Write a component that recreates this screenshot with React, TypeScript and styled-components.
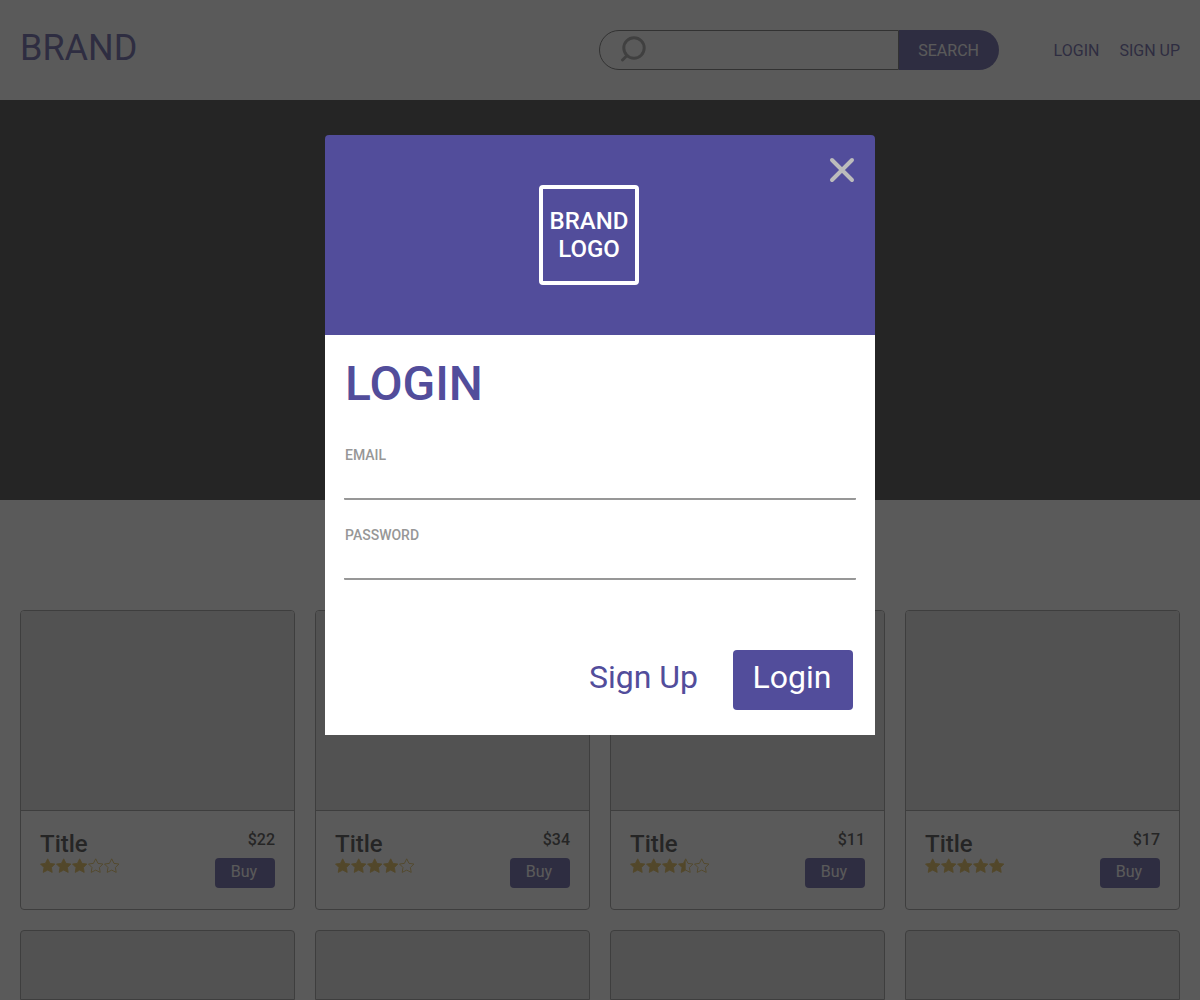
import React from 'react';
import styled, { createGlobalStyle, ThemeProvider } from 'styled-components';

const theme = {
  primary: '#524d9b',
  ink: '#2f2f2f',
  muted: '#979797',
  line: '#909090',
  media: '#e0e0e0',
  star: '#e0b440',
  radius: '4px',
};

const GlobalStyle = createGlobalStyle`
  *, *::before, *::after { box-sizing: border-box; }
  body {
    margin: 0;
    background: #fff;
    font-family: Roboto, "Liberation Sans", sans-serif;
    font-size: 16px;
  }
  button, input { font: inherit; }
  button { cursor: pointer; }
`;

const Header = styled.header`
  display: flex;
  align-items: center;
  min-height: 100px;
  padding: 0 20px;
`;

const Brand = styled.a`
  margin-right: auto;
  padding-bottom: 4px;
  color: ${({ theme }) => theme.primary};
  font-size: 36px;
  line-height: 40px;
  text-decoration: none;
`;

const SearchForm = styled.form`
  display: flex;
  width: 400px;
  height: 40px;
`;

const SearchField = styled.div`
  display: flex;
  flex: 1;
  align-items: center;
  min-width: 0;
  padding-left: 20px;
  border: 1px solid #606060;
  border-radius: 20px 0 0 20px;
  svg { flex: none; margin-bottom: 2px; }
`;

const SearchInput = styled.input`
  flex: 1;
  min-width: 0;
  height: 100%;
  padding: 0 12px;
  border: 0;
  outline: 0;
  background: transparent;
`;

const SearchButton = styled.button`
  width: 100px;
  padding: 0;
  border: 0;
  border-radius: 0 20px 20px 0;
  background: ${({ theme }) => theme.primary};
  color: #fff;
`;

const Nav = styled.nav`
  display: flex;
  gap: 20px;
  margin-left: 55px;
`;

const NavLink = styled.a`
  color: ${({ theme }) => theme.primary};
  text-decoration: none;
`;

const Hero = styled.section`
  height: 400px;
  background: ${({ theme }) => theme.ink};
`;

const ProductGrid = styled.section`
  display: grid;
  grid-template-columns: repeat(4, minmax(0, 1fr));
  gap: 20px;
  padding: 110px 20px 0;
`;

const Card = styled.article`
  border: 1px solid ${({ theme }) => theme.line};
  border-radius: ${({ theme }) => theme.radius};
  overflow: hidden;
`;

const CardMedia = styled.div`
  height: 200px;
  border-bottom: 1px solid ${({ theme }) => theme.line};
  background: ${({ theme }) => theme.media};
`;

const CardPeek = styled.div`
  height: 70px;
  border: 1px solid ${({ theme }) => theme.line};
  border-radius: 4px 4px 0 0;
  background: ${({ theme }) => theme.media};
`;

const CardBody = styled.div`
  display: flex;
  justify-content: space-between;
  padding: 19px 19px 21px;
`;

const CardTitle = styled.h2`
  margin: 0;
  color: ${({ theme }) => theme.ink};
  font-size: 24px;
  font-weight: 500;
  line-height: 28px;
`;

const Stars = styled.div`
  display: flex;
`;

const Purchase = styled.div`
  display: flex;
  flex-direction: column;
  align-items: flex-end;
  gap: 8px;
`;

const Price = styled.span`
  color: ${({ theme }) => theme.ink};
  font-weight: 500;
  line-height: 20px;
`;

const BuyButton = styled.button`
  width: 60px;
  height: 30px;
  padding: 0 2px 4px 0;
  border: 0;
  border-radius: ${({ theme }) => theme.radius};
  background: ${({ theme }) => theme.primary};
  color: #fff;
`;

const Overlay = styled.div`
  position: fixed;
  inset: 0;
  display: flex;
  align-items: flex-start;
  justify-content: center;
  padding: 135px 20px 20px;
  overflow: auto;
  background: rgba(35, 35, 35, 0.75);
`;

const Modal = styled.div`
  width: 100%;
  max-width: 550px;
`;

const ModalHeader = styled.div`
  display: flex;
  align-items: center;
  min-height: 200px;
  padding: 20px 20px 20px 24px;
  border-radius: 4px 4px 0 0;
  background: ${({ theme }) => theme.primary};
`;

const Logo = styled.div`
  display: flex;
  align-items: center;
  justify-content: center;
  width: 100px;
  height: 100px;
  margin: 0 auto;
  border: 4px solid #fff;
  border-radius: ${({ theme }) => theme.radius};
  color: #fff;
  font-size: 24px;
  font-weight: 500;
  line-height: 28px;
  text-align: center;
`;

const CloseButton = styled.button`
  display: flex;
  align-items: center;
  align-self: flex-start;
  width: 26px;
  height: 30px;
  padding: 0;
  border: 0;
  background: none;
`;

const LoginForm = styled.form`
  padding: 21px 19px 25px;
  background: #fff;
`;

const Heading = styled.h1`
  margin: 0 0 35px;
  padding-left: 1px;
  color: ${({ theme }) => theme.primary};
  font-size: 48px;
  font-weight: 500;
  line-height: 56px;
`;

const Field = styled.div`
  display: flex;
  flex-direction: column;
  margin-bottom: 27px;
`;

const Label = styled.label`
  padding-left: 1px;
  color: ${({ theme }) => theme.muted};
  font-size: 14px;
  font-weight: 500;
  line-height: 16px;
`;

const TextInput = styled.input`
  width: 100%;
  height: 37px;
  padding: 0;
  border: 0;
  border-bottom: 2px solid ${({ theme }) => theme.muted};
  border-radius: 1px;
  outline: 0;
  background: transparent;
`;

const Actions = styled.div`
  display: flex;
  align-items: center;
  justify-content: flex-end;
  gap: 35px;
  margin-top: 70px;
  padding-right: 3px;
`;

const SignUpLink = styled.a`
  padding-bottom: 6px;
  color: ${({ theme }) => theme.primary};
  font-size: 32px;
  text-decoration: none;
`;

const SubmitButton = styled.button`
  width: 120px;
  height: 60px;
  padding: 0 2px 6px 0;
  border: 0;
  border-radius: ${({ theme }) => theme.radius};
  background: ${({ theme }) => theme.primary};
  color: #fff;
  font-size: 32px;
`;

const STAR = 'M7.7 0.8 L10 5.4 L14.9 6 L11.4 9.5 L12.2 14.4 L7.7 12.1 L3.2 14.4 L4 9.5 L0.5 6 L5.4 5.4 Z';
const HALF_STAR = 'M7.7 0.8 L7.7 12.1 L3.2 14.4 L4 9.5 L0.5 6 L5.4 5.4 Z';

function Star({ amount }: { amount: number }) {
  return (
    <svg width="16" height="16" viewBox="0 0 16 16" fill="none" stroke={theme.star} strokeLinejoin="round" aria-hidden="true">
      {amount > 0 && <path d={amount === 1 ? STAR : HALF_STAR} fill={theme.star} stroke="none" />}
      <path d={STAR} strokeWidth="0.9" />
    </svg>
  );
}

function Rating({ value }: { value: number }) {
  return (
    <Stars role="img" aria-label={`${value} out of 5 stars`}>
      {[0, 1, 2, 3, 4].map((i) => (
        <Star key={i} amount={Math.max(0, Math.min(1, value - i))} />
      ))}
    </Stars>
  );
}

const products = [
  { id: 1, title: 'Title', price: 22, rating: 3 },
  { id: 2, title: 'Title', price: 34, rating: 4 },
  { id: 3, title: 'Title', price: 11, rating: 3.5 },
  { id: 4, title: 'Title', price: 17, rating: 5 },
];

export default function App() {
  return (
    <ThemeProvider theme={theme}>
      <GlobalStyle />
      <Header>
        <Brand href="#">BRAND</Brand>
        <SearchForm role="search">
          <SearchField>
            <svg width="26" height="26" viewBox="0 0 26 26" fill="none" stroke="#999" strokeWidth="3" strokeLinecap="round" aria-hidden="true">
              <circle cx="14" cy="12" r="10.2" />
              <path d="M7 19.5 L2.5 24" />
            </svg>
            <SearchInput type="text" aria-label="Search" />
          </SearchField>
          <SearchButton type="submit">SEARCH</SearchButton>
        </SearchForm>
        <Nav>
          <NavLink href="#">LOGIN</NavLink>
          <NavLink href="#">SIGN UP</NavLink>
        </Nav>
      </Header>
      <main>
        <Hero />
        <ProductGrid>
          {products.map((p) => (
            <Card key={p.id}>
              <CardMedia />
              <CardBody>
                <div>
                  <CardTitle>{p.title}</CardTitle>
                  <Rating value={p.rating} />
                </div>
                <Purchase>
                  <Price>${p.price}</Price>
                  <BuyButton type="button">Buy</BuyButton>
                </Purchase>
              </CardBody>
            </Card>
          ))}
          {products.map((p) => (
            <CardPeek key={p.id} />
          ))}
        </ProductGrid>
      </main>
      <Overlay>
        <Modal role="dialog" aria-modal="true" aria-labelledby="login-heading">
          <ModalHeader>
            <Logo>BRAND LOGO</Logo>
            <CloseButton type="button" aria-label="Close">
              <svg width="26" height="26" viewBox="0 0 26 26" stroke="#bcbcbc" strokeWidth="4" strokeLinecap="round" aria-hidden="true">
                <path d="M3 3 L23 23 M23 3 L3 23" />
              </svg>
            </CloseButton>
          </ModalHeader>
          <LoginForm>
            <Heading id="login-heading">LOGIN</Heading>
            <Field>
              <Label htmlFor="email">EMAIL</Label>
              <TextInput id="email" type="email" />
            </Field>
            <Field>
              <Label htmlFor="password">PASSWORD</Label>
              <TextInput id="password" type="password" />
            </Field>
            <Actions>
              <SignUpLink href="#">Sign Up</SignUpLink>
              <SubmitButton type="submit">Login</SubmitButton>
            </Actions>
          </LoginForm>
        </Modal>
      </Overlay>
    </ThemeProvider>
  );
}
